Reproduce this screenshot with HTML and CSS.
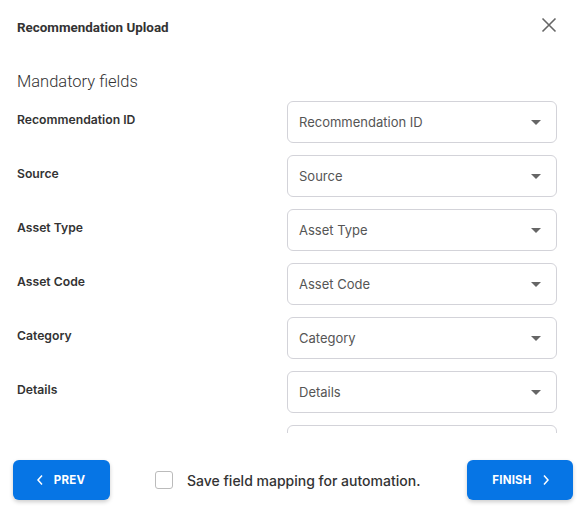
FILE: index.html
```html
<!DOCTYPE html>
<html>
<head>
<meta charset="utf-8">
<link rel="stylesheet" href="styles.css">
</head>
<body>
<div class="dialog">
  <div class="header">
    <div class="title">Recommendation Upload</div>
    <button class="close" aria-label="close">
      <svg width="16" height="16" viewBox="0 0 16 16"><path d="M1.5 1.5 L14.5 14.5 M14.5 1.5 L1.5 14.5" stroke="#666" stroke-width="1.6" fill="none"/></svg>
    </button>
  </div>
  <div class="section-title">Mandatory fields</div>
  <div class="fields">
    <div class="row"><div class="label">Recommendation ID</div><div class="select"><span>Recommendation ID</span><i class="caret"></i></div></div>
    <div class="row"><div class="label">Source</div><div class="select"><span>Source</span><i class="caret"></i></div></div>
    <div class="row"><div class="label">Asset Type</div><div class="select"><span>Asset Type</span><i class="caret"></i></div></div>
    <div class="row"><div class="label">Asset Code</div><div class="select"><span>Asset Code</span><i class="caret"></i></div></div>
    <div class="row"><div class="label">Category</div><div class="select"><span>Category</span><i class="caret"></i></div></div>
    <div class="row"><div class="label">Details</div><div class="select"><span>Details</span><i class="caret"></i></div></div>
    <div class="row"><div class="label"></div><div class="select"><span></span></div></div>
  </div>
  <div class="footer">
    <button class="btn prev">
      <svg width="8" height="12" viewBox="0 0 8 12"><path d="M6 1.5 L2 6 L6 10.5" stroke="#fff" stroke-width="1.5" fill="none"/></svg>
      <span>PREV</span>
    </button>
    <label class="check">
      <span class="box"></span>
      <span class="check-text">Save field mapping for automation.</span>
    </label>
    <button class="btn finish">
      <span>FINISH</span>
      <svg width="8" height="12" viewBox="0 0 8 12"><path d="M2 1.5 L6 6 L2 10.5" stroke="#fff" stroke-width="1.5" fill="none"/></svg>
    </button>
  </div>
</div>
</body>
</html>
```
FILE: styles.css
```css
* { box-sizing: border-box; }
html, body { margin: 0; padding: 0; background: #fff; }
body { width: 583px; height: 520px; overflow: hidden; font-family: Inter, "Noto Sans", sans-serif; }
.dialog { width: 583px; height: 520px; display: flex; flex-direction: column; }
.header {
  height: 54px;
  display: flex;
  align-items: center;
  justify-content: space-between;
  padding: 0 26px 0 17px;
}
.title { font-family: Roboto, sans-serif; font-weight: 700; font-size: 13.4px; color: #333; }
.close { background: none; border: 0; padding: 0; width: 16px; height: 16px; display: flex; margin-top: -4px; }
.section-title {
  margin-top: 16px;
  padding-left: 17px;
  font-family: Roboto, sans-serif;
  font-weight: 300;
  font-size: 16.5px;
  line-height: 24px;
  color: #333;
}
.fields {
  margin-top: 7px;
  height: 332px;
  overflow: hidden;
  display: flex;
  flex-direction: column;
  gap: 12px;
  flex-shrink: 0;
}
.row { display: flex; align-items: flex-start; padding-left: 17px; flex-shrink: 0; }
.label {
  width: 270px;
  padding-top: 11px;
  font-size: 12.2px;
  line-height: 16px;
  font-weight: 600;
  color: #333;
}
.select {
  width: 270px;
  height: 42px;
  border: 1px solid #d3d3d9;
  border-radius: 6px;
  display: flex;
  align-items: center;
  justify-content: space-between;
  padding: 0 15px 0 11px;
  font-size: 13px;
  color: #555;
}
.caret {
  width: 0; height: 0;
  border-left: 5px solid transparent;
  border-right: 5px solid transparent;
  border-top: 5px solid #666;
}
.footer {
  margin-top: 27px;
  height: 40px;
  display: flex;
  align-items: center;
  padding: 0 10px 0 13px;
}
.btn {
  height: 40px;
  border: 0;
  border-radius: 6px;
  background: #0675e5;
  color: #fff;
  font-family: Inter, sans-serif;
  font-weight: 700;
  font-size: 11.5px;
  letter-spacing: 0.2px;
  display: flex;
  align-items: center;
  justify-content: center;
  gap: 10px;
  box-shadow: 0 2px 4px rgba(0,0,0,0.2);
}
.prev { width: 97px; padding-right: 8px; }
.finish { width: 106px; margin-left: auto; padding-left: 8px; }
.check { display: flex; align-items: center; margin-left: 45px; gap: 14px; }
.box { width: 18px; height: 18px; border: 1px solid #bbb; border-radius: 3px; }
.check-text { font-size: 14px; font-weight: 500; color: #333; }
```
